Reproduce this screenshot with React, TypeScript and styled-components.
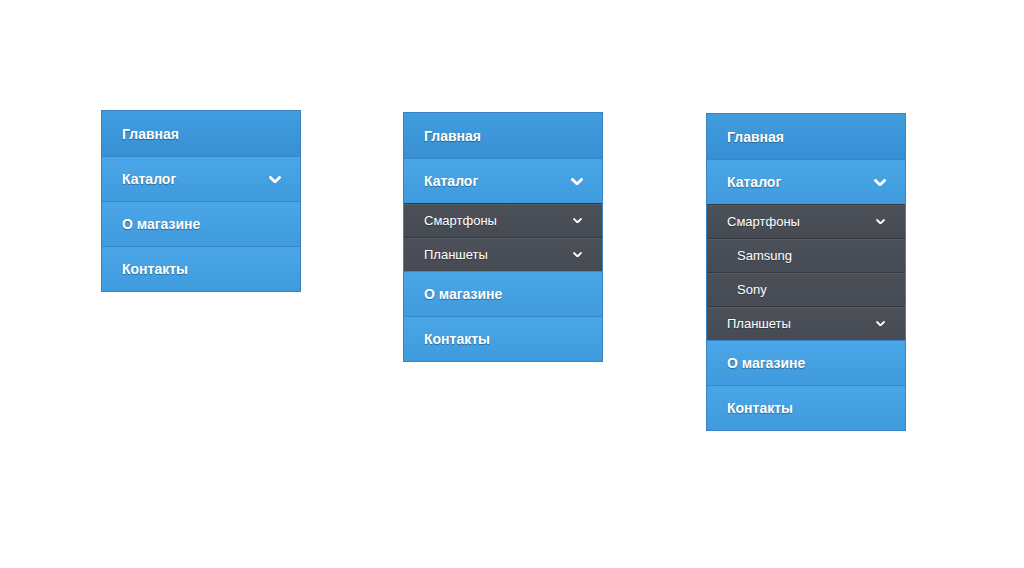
import React from 'react'
import styled, { createGlobalStyle, css } from 'styled-components'

const GlobalStyle = createGlobalStyle`
  html, body {
    margin: 0;
    padding: 0;
    background: #ffffff;
  }
  body {
    font-family: "Liberation Sans", Arial, sans-serif;
  }
`

type SubItem = { label: string; children?: string[]; open?: boolean }
type Item = { label: string; arrow?: boolean; sub?: SubItem[] }

const menus: { offset: number; shift: number; items: Item[] }[] = [
  {
    offset: 0,
    shift: 0,
    items: [
      { label: 'Главная' },
      { label: 'Каталог', arrow: true },
      { label: 'О магазине' },
      { label: 'Контакты' },
    ],
  },
  {
    offset: 2,
    shift: 0,
    items: [
      { label: 'Главная' },
      {
        label: 'Каталог',
        arrow: true,
        sub: [{ label: 'Смартфоны' }, { label: 'Планшеты' }],
      },
      { label: 'О магазине' },
      { label: 'Контакты' },
    ],
  },
  {
    offset: 3,
    shift: 1,
    items: [
      { label: 'Главная' },
      {
        label: 'Каталог',
        arrow: true,
        sub: [
          { label: 'Смартфоны', open: true, children: ['Samsung', 'Sony'] },
          { label: 'Планшеты' },
        ],
      },
      { label: 'О магазине' },
      { label: 'Контакты' },
    ],
  },
]

const Chevron = ({ size }: { size: 'big' | 'small' }) => {
  const w = size === 'big' ? 12 : 9
  return (
    <svg width={w} height={w * 0.66} viewBox="0 0 12 8" fill="none">
      <polyline
        points="1.5,1.5 6,6 10.5,1.5"
        stroke="#fff"
        strokeWidth={size === 'big' ? 2.8 : 2.6}
        strokeLinecap="square"
        strokeLinejoin="miter"
      />
    </svg>
  )
}

const App = () => {
  return (
    <Page>
      <GlobalStyle />
      {menus.map((m, mi) => (
        <Menu key={mi} $offset={m.offset} $shift={m.shift}>
          {m.items.map((it, i) => (
            <React.Fragment key={i}>
              <MainRow $first={i === 0}>
                <span>{it.label}</span>
                {it.arrow && <Chevron size="big" />}
              </MainRow>
              {it.sub &&
                it.sub.map((s, si) => (
                  <React.Fragment key={si}>
                    <SubRow>
                      <span>{s.label}</span>
                      <Chevron size="small" />
                    </SubRow>
                    {s.open &&
                      s.children?.map((c) => (
                        <SubRow key={c} $nested>
                          <span>{c}</span>
                        </SubRow>
                      ))}
                  </React.Fragment>
                ))}
            </React.Fragment>
          ))}
        </Menu>
      ))}
    </Page>
  )
}

const Page = styled.div`
  display: flex;
  align-items: flex-start;
  gap: 102px;
  padding: 110px 0 0 101px;
  min-height: 568px;
  box-sizing: border-box;
`

const Menu = styled.div<{ $offset: number; $shift: number }>`
  width: 200px;
  box-sizing: border-box;
  margin-top: ${(p) => p.$offset}px;
  margin-left: ${(p) => p.$shift}px;
  border: 1px solid #3a83c2;
  display: flex;
  flex-direction: column;
`

const rowBase = css`
  display: flex;
  align-items: center;
  justify-content: space-between;
  box-sizing: border-box;
  color: #ffffff;
  span {
    white-space: nowrap;
  }
`

const MainRow = styled.div<{ $first?: boolean }>`
  ${rowBase}
  height: ${(p) => (p.$first ? 45 : 45)}px;
  padding: 0 19px 0 20px;
  font-size: 14px;
  font-weight: bold;
  text-shadow: 0 1px 1px rgba(0, 0, 0, 0.35);
  background: ${(p) =>
    p.$first
      ? 'linear-gradient(#409ddf, #3890d4)'
      : 'linear-gradient(#4aa6e6, #3f9bdd)'};
  border-top: ${(p) => (p.$first ? 'none' : '1px solid #3987c8')};
  svg {
    margin-top: 1px;
  }
`

const SubRow = styled.div<{ $nested?: boolean }>`
  ${rowBase}
  height: 34px;
  padding: 0 20px 0 ${(p) => (p.$nested ? 30 : 20)}px;
  font-size: 13px;
  background: linear-gradient(#4b5059, #454a53);
  border-top: 1px solid #35383e;
  box-shadow: inset 0 1px 0 rgba(255, 255, 255, 0.07);
  text-shadow: 0 1px 0 rgba(0, 0, 0, 0.3);
`

export default App
